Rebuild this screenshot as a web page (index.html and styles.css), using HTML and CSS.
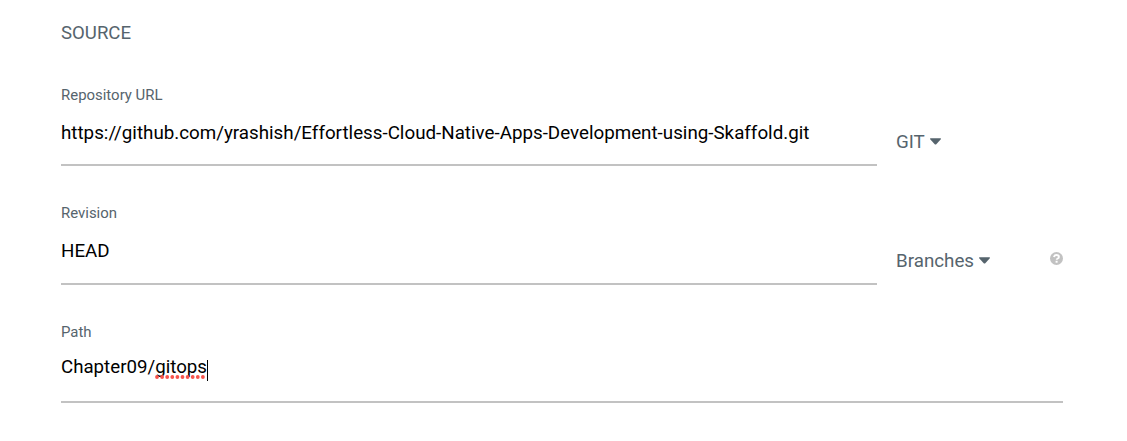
FILE: index.html
```html
<!DOCTYPE html>
<html lang="en">
<head>
<meta charset="utf-8">
<title>Source</title>
<link rel="stylesheet" href="styles.css">
</head>
<body>
<main class="panel">
  <h1 class="title">SOURCE</h1>
  <section class="row">
    <div class="field">
      <label class="label">Repository URL</label>
      <div class="value value-url">https://github.com/yrashish/Effortless-Cloud-Native-Apps-Development-using-Skaffold.git</div>
    </div>
    <div class="select select-git"><span class="select-text">GIT</span><svg class="caret" viewBox="0 0 11 7"><path d="M.6 .3h9.8q1 .2.4 1L6.3 6.3q-.8.6-1.6 0L.2 1.3Q-.4.5.6 .3z"/></svg></div>
  </section>
  <section class="row row-revision">
    <div class="field">
      <label class="label">Revision</label>
      <div class="value value-head">HEAD</div>
    </div>
    <div class="select select-branch"><span class="select-text">Branches</span><svg class="caret" viewBox="0 0 11 7"><path d="M.6 .3h9.8q1 .2.4 1L6.3 6.3q-.8.6-1.6 0L.2 1.3Q-.4.5.6 .3z"/></svg></div>
    <svg class="help" viewBox="0 0 13 13"><circle cx="6.5" cy="6.5" r="6.5" fill="#c2c2c2"/><path d="M3.9 4.9Q4.4 3 6.4 3q2.5 0 2.5 1.9 0 1-1.2 1.6-1 .5-1 1.3" fill="none" stroke="#fff" stroke-width="1.9"/><rect x="5.6" y="8.8" width="2" height="1.9" fill="#fff"/></svg>
  </section>
  <section class="row">
    <div class="field">
      <label class="label">Path</label>
      <div class="value value-path">Chapter09/<span class="misspelled">gitops<svg class="dots" viewBox="0 0 50 4"><path d="M2 2H48.2" /></svg></span><span class="cursor"></span></div>
    </div>
  </section>
</main>
</body>
</html>
```
FILE: styles.css
```css
body {
  margin: 0;
  background: #fff;
  font-family: Roboto, sans-serif;
  color: #56646d;
}
.panel {
  box-sizing: border-box;
  width: 1127px;
  height: 441px;
  padding: 21px 64px 0 61px;
}
.title {
  margin: 0 0 26px;
  font-size: 18.6px;
  font-weight: 400;
  line-height: 25px;
}
.row {
  display: flex;
  height: 94px;
  margin-bottom: 25px;
}
.row-revision {
  margin-bottom: 24px;
}
.field {
  box-sizing: border-box;
  flex: 1;
  border-bottom: 2px solid #c2c2c2;
}
.row:not(:last-child) .field {
  flex: 0 0 816px;
}
.label {
  display: block;
  padding-top: 13px;
  font-size: 14.95px;
  line-height: 20px;
}
.row-revision .label {
  padding-top: 12px;
}
.value {
  display: flex;
  align-items: center;
  height: 24px;
  margin-top: 16px;
  font-size: 18.77px;
  line-height: 24px;
  color: #000;
  white-space: nowrap;
}
.value-path {
  margin-top: 13px;
  font-size: 18.7px;
}
.select {
  display: flex;
  align-items: center;
  height: 24px;
  margin: 58px 0 0 19px;
  font-size: 18.77px;
  line-height: 24px;
}
.caret {
  width: 11px;
  height: 7px;
  margin: 0 0 1px 5px;
  fill: #56646d;
}
.help {
  width: 13px;
  height: 13px;
  margin: 61px 0 0 auto;
}
.misspelled {
  position: relative;
}
.dots {
  position: absolute;
  left: 0;
  top: 20px;
  width: 50px;
  height: 4px;
  fill: none;
  stroke: #f8544c;
  stroke-width: 3.8;
  stroke-linecap: round;
  stroke-dasharray: 0 5.1;
}
.cursor {
  width: 1px;
  height: 21px;
  margin-top: 7px;
  background: #000;
}
```
